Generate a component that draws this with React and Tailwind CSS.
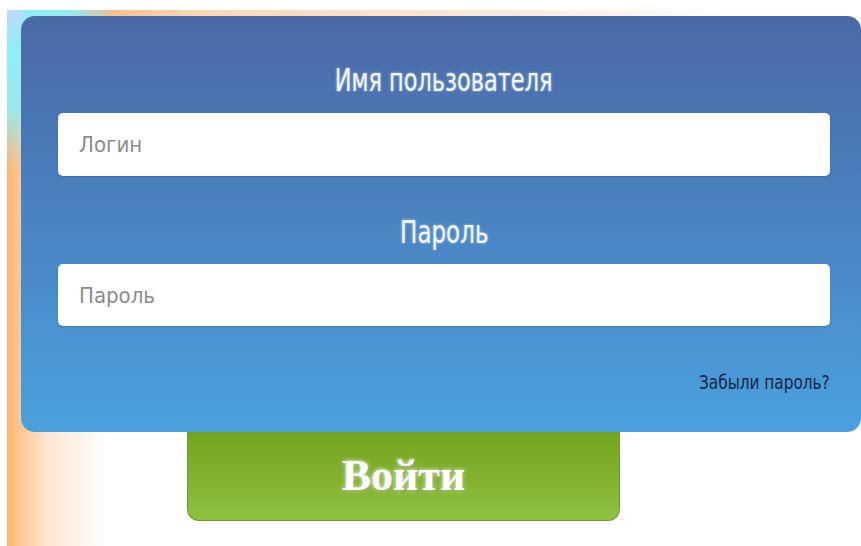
import React from 'react';

const narrow = { fontFamily: '"Liberation Sans Narrow", "DejaVu Sans Condensed", "Liberation Sans", sans-serif' };

const LoginPage = () => {
    return (
        <div className='h-[546px] w-[861px] overflow-hidden bg-white pl-[7px] pt-[10px]'>
            {/* backdrop: cyan corner, peach top strip, orange left fade */}
            <div className="h-[536px] bg-no-repeat [background-image:radial-gradient(ellipse_110px_160px_at_0_0,#cdd2fa_0px,#90eef6_22%,rgba(144,238,246,0.9)_62%,rgba(144,238,246,0)_100%),linear-gradient(to_right,#f7b77c_80px,#fcd6b2_180px,#feeadb_520px,#ffffff_720px),linear-gradient(to_right,#fdb56f_0px,#fdc895_14px,#fee6cf_40px,rgba(255,255,255,0)_100px)] [background-size:100%_100%,100%_6px,100%_100%]">
                <div className="pt-[6px] pl-[14px]">
                    <form
                        onSubmit={(e) => e.preventDefault()}
                        className="relative z-10 w-[840px] h-[416px] rounded-[14px] bg-gradient-to-b from-[#4a69a6] via-[#4a84c3] to-[#4aa1dd] pl-[37px] pr-[31px] pt-[44px] flex flex-col"
                        style={narrow}
                    >
                        {/* Username */}
                        <label className="h-[40px] flex items-center justify-center text-[32px] text-[#f2f7ff] [text-shadow:0_0_3px_rgba(255,255,255,0.6)]">
                            <span className="inline-block scale-x-[0.78]">Имя пользователя</span>
                        </label>
                        <input
                            type="text"
                            placeholder="Логин"
                            className="mt-[13px] h-[63px] w-full rounded-[5px] bg-white px-[21px] text-[22px] text-gray-700 placeholder:text-[#8c8c8c] outline-none shadow-[0_1px_2px_rgba(0,0,0,0.15)]"
                        />

                        {/* Password */}
                        <label className="mt-[36px] h-[40px] flex items-center justify-center text-[32px] text-[#f2f7ff] [text-shadow:0_0_3px_rgba(255,255,255,0.6)]">
                            <span className="inline-block scale-x-[0.8]">Пароль</span>
                        </label>
                        <input
                            type="password"
                            placeholder="Пароль"
                            className="mt-[12px] h-[62px] w-full rounded-[5px] bg-white px-[21px] text-[22px] text-gray-700 placeholder:text-[#8c8c8c] outline-none shadow-[0_1px_2px_rgba(0,0,0,0.15)]"
                        />

                        <div className="mt-[45px] h-[22px] flex items-center justify-end">
                            <a href="#" className="inline-block origin-right scale-x-[0.85] text-[20px] text-[#15244a]">
                                Забыли пароль?
                            </a>
                        </div>
                    </form>
                    <button
                        type="submit"
                        className="ml-[166px] block h-[89px] w-[433px] rounded-b-[12px] border border-t-0 border-[#6b9b2c] bg-gradient-to-b from-[#74a31b] to-[#90c040] text-[44px] font-bold text-white [text-shadow:0_0_4px_rgba(255,255,255,0.9),1px_1px_2px_rgba(50,80,10,0.5)]"
                        style={{ fontFamily: '"Liberation Serif", "DejaVu Serif", serif' }}
                    >
                        Войти
                    </button>
                </div>
            </div>
        </div>
    );
};

export default LoginPage;
